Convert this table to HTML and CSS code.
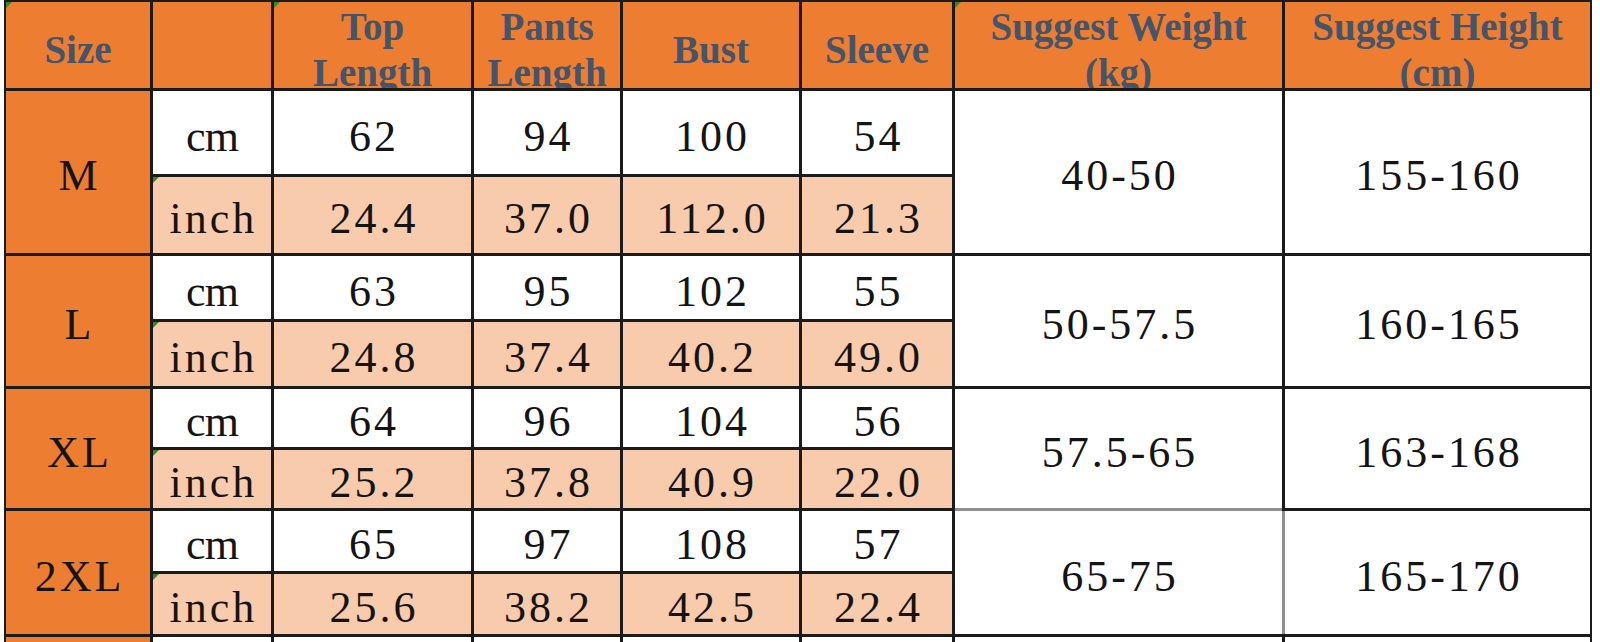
FILE: index.html
```html
<!DOCTYPE html>
<html lang="en">
<head>
<meta charset="utf-8">
<title>Size Chart</title>
<link rel="stylesheet" href="styles.css">
</head>
<body>
<div class="chart">
  <div class="hd single flag">Size</div>
  <div class="hd"></div>
  <div class="hd two flag">Top<br>Length</div>
  <div class="hd two">Pants<br>Length</div>
  <div class="hd single">Bust</div>
  <div class="hd single">Sleeve</div>
  <div class="hd two flag">Suggest Weight<br>(kg)</div>
  <div class="hd two">Suggest Height<br>(cm)</div>

  <div class="c size">M</div>
  <div class="c cm unit">cm</div>
  <div class="c cm">62</div>
  <div class="c cm">94</div>
  <div class="c cm">100</div>
  <div class="c cm">54</div>
  <div class="c sug">40-50</div>
  <div class="c sug">155-160</div>
  <div class="c in unit flag">inch</div>
  <div class="c in">24.4</div>
  <div class="c in">37.0</div>
  <div class="c in">112.0</div>
  <div class="c in">21.3</div>

  <div class="c size">L</div>
  <div class="c cm unit">cm</div>
  <div class="c cm">63</div>
  <div class="c cm">95</div>
  <div class="c cm">102</div>
  <div class="c cm">55</div>
  <div class="c sug">50-57.5</div>
  <div class="c sug">160-165</div>
  <div class="c in unit flag">inch</div>
  <div class="c in">24.8</div>
  <div class="c in">37.4</div>
  <div class="c in">40.2</div>
  <div class="c in">49.0</div>

  <div class="c size">XL</div>
  <div class="c cm unit">cm</div>
  <div class="c cm">64</div>
  <div class="c cm">96</div>
  <div class="c cm">104</div>
  <div class="c cm">56</div>
  <div class="c sug">57.5-65</div>
  <div class="c sug">163-168</div>
  <div class="c in unit flag">inch</div>
  <div class="c in">25.2</div>
  <div class="c in">37.8</div>
  <div class="c in">40.9</div>
  <div class="c in">22.0</div>

  <div class="c size">2XL</div>
  <div class="c cm unit">cm</div>
  <div class="c cm">65</div>
  <div class="c cm">97</div>
  <div class="c cm">108</div>
  <div class="c cm">57</div>
  <div class="c sug soft-top">65-75</div>
  <div class="c sug soft-left">165-170</div>
  <div class="c in unit flag">inch</div>
  <div class="c in">25.6</div>
  <div class="c in">38.2</div>
  <div class="c in">42.5</div>
  <div class="c in">22.4</div>

  <div class="tail orange"></div>
  <div class="tail"></div>
  <div class="tail"></div>
  <div class="tail"></div>
  <div class="tail"></div>
  <div class="tail"></div>
  <div class="tail"></div>
  <div class="tail"></div>
</div>
</body>
</html>
```

FILE: styles.css
```css
html, body {
  margin: 0;
  padding: 0;
  height: 642px;
  overflow: hidden;
  background: #ffffff;
}

.chart {
  display: grid;
  grid-template-columns: 144px 118px 197px 146px 176px 150px 327px 305px;
  grid-template-rows: 86px 83px 76px 63px 64px 58px 58px 60px 60px 5px;
  gap: 3px;
  padding: 2px 2px 0 2px;
  margin-left: 4px;
  width: max-content;
  background: #1b1b1b;
}

.hd {
  position: relative;
  background: #ed7d31;
  color: #44546a;
  font-family: "Liberation Serif", "Times New Roman", serif;
  font-weight: bold;
  font-size: 39px;
  line-height: 46px;
  text-align: center;
  display: flex;
  justify-content: center;
  overflow: hidden;
  box-sizing: border-box;
}

.hd.single {
  align-items: center;
  padding-top: 9px;
}

.hd.two {
  align-items: flex-start;
  padding-top: 2px;
}

.c {
  position: relative;
  display: flex;
  align-items: center;
  justify-content: center;
  box-sizing: border-box;
  padding-top: 7px;
  padding-left: 3px;
  font-family: "Liberation Serif", "Times New Roman", serif;
  font-size: 44px;
  letter-spacing: 3px;
  color: #141414;
  overflow: hidden;
  white-space: nowrap;
}

.size {
  grid-row: span 2;
  background: #ed7d31;
}

.sug {
  grid-row: span 2;
  background: #ffffff;
}

.cm {
  background: #ffffff;
}

.in {
  background: #f8cbad;
}

.unit.cm {
  letter-spacing: -1px;
  padding-left: 0;
}

.sug.soft-top {
  box-shadow: 0 -3px 0 #8f8f8f;
}

.sug.soft-left {
  box-shadow: -3px 0 0 #8f8f8f;
}

.tail {
  background: #ffffff;
}

.tail.orange {
  background: #ed7d31;
}

.flag::before {
  content: "";
  position: absolute;
  left: 0;
  top: 0;
  width: 0;
  height: 0;
  border-top: 6px solid #2e8b2e;
  border-right: 6px solid transparent;
}
```
